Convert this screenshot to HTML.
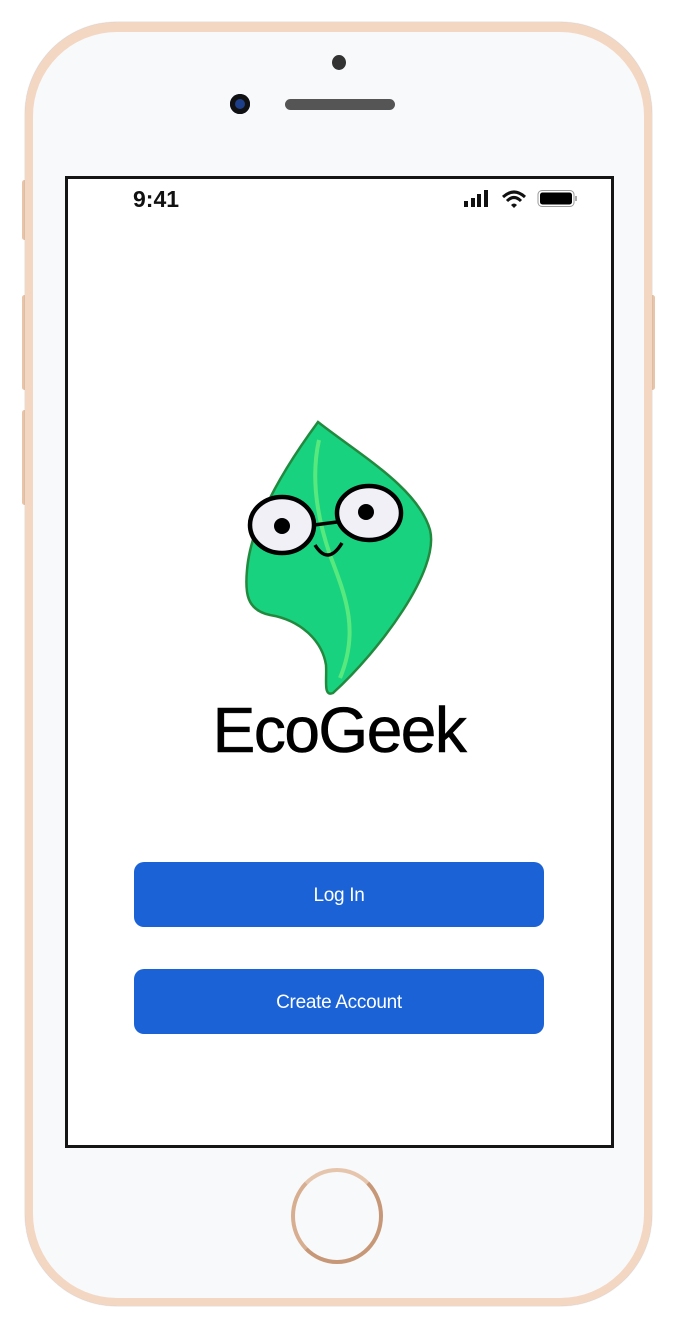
<!DOCTYPE html>
<html><head><meta charset="utf-8"><style>
html,body{margin:0;padding:0;background:#fff;}
body{width:676px;height:1330px;position:relative;overflow:hidden;font-family:"Liberation Sans",sans-serif;}
.body{position:absolute;left:25px;top:22px;width:627px;height:1284px;border-radius:92px;background:#f3d7c3;box-shadow:0 0 1px #999;}
.face{position:absolute;left:33px;top:32px;width:611px;height:1266px;border-radius:84px;background:#f8f9fb;}
.screen{position:absolute;left:65px;top:176px;width:543px;height:966px;border:3px solid #151515;background:#fff;}
.btn{position:absolute;left:134px;width:410px;height:65px;border-radius:10px;background:#1a62d6;color:#fff;font-size:19px;text-align:center;line-height:67px;letter-spacing:-0.3px;}
.side{position:absolute;background:#e9c4a8;}
</style></head><body>
<div class="side" style="left:22px;top:180px;width:5px;height:60px;border-radius:3px"></div>
<div class="side" style="left:22px;top:295px;width:5px;height:95px;border-radius:3px"></div>
<div class="side" style="left:22px;top:410px;width:5px;height:95px;border-radius:3px"></div>
<div class="side" style="left:650px;top:295px;width:5px;height:95px;border-radius:3px"></div>
<div class="body"></div>
<div class="face"></div>
<div style="position:absolute;left:332px;top:55px;width:14px;height:15px;border-radius:50%;background:#333"></div>
<div style="position:absolute;left:230px;top:94px;width:20px;height:20px;border-radius:50%;background:#111;box-shadow:inset 0 0 0 5px #111, inset 0 0 0 10px #1d3f8a"></div>
<div style="position:absolute;left:285px;top:99px;width:110px;height:11px;border-radius:6px;background:#555"></div>
<div class="screen"></div>
<div style="position:absolute;left:133px;top:186px;font-size:23px;font-weight:bold;color:#111">9:41</div>
<svg style="position:absolute;left:460px;top:186px" width="122" height="26" viewBox="460 186 122 26">
<rect x="464" y="201" width="4" height="6" fill="#111"/><rect x="471" y="198" width="4" height="9" fill="#111"/><rect x="477" y="194" width="4" height="13" fill="#111"/><rect x="484" y="190" width="4" height="17" fill="#111"/>
<path d="M503 197 Q514 187 525 197" stroke="#111" stroke-width="3" fill="none"/><path d="M507 201 Q514 194 521 201" stroke="#111" stroke-width="3" fill="none"/><path d="M511 205 L514 208 L517 205 Q514 202 511 205Z" fill="#111"/>
<rect x="538" y="190.5" width="36" height="16" rx="4" fill="none" stroke="#999" stroke-width="1"/><rect x="540" y="192.5" width="32" height="12" rx="2.5" fill="#000"/><rect x="575" y="196" width="2" height="5" fill="#aaa"/>
</svg>
<svg style="position:absolute;left:0;top:0" width="676" height="760" viewBox="0 0 676 760">
<path d="M318,422 C360,455 418,488 430,530 C440,570 380,650 333,693 C323,697 327,680 326,665 C322,640 300,620 270,615 C246,610 245,592 247,570 C251,520 290,460 318,422 Z" fill="#18d27f" stroke="#228a3f" stroke-width="2.5"/>
<path d="M319,440 C310,480 318,520 330,555 C345,595 360,630 340,678" fill="none" stroke="#57e97e" stroke-width="4"/>
<ellipse cx="282" cy="525" rx="32" ry="28" fill="#f1f0f6" stroke="#000" stroke-width="4.5"/>
<ellipse cx="369" cy="513" rx="32" ry="27" fill="#f1f0f6" stroke="#000" stroke-width="4.5"/>
<circle cx="282" cy="526" r="8" fill="#000"/><circle cx="366" cy="512" r="8" fill="#000"/>
<path d="M314,525 L337,522" stroke="#000" stroke-width="3.5"/>
<path d="M315,545 Q328,566 342,543" fill="none" stroke="#000" stroke-width="3.5"/>
<text x="339" y="752" text-anchor="middle" font-family="Liberation Sans, sans-serif" font-size="64" fill="#000" letter-spacing="-1.5" stroke="#000" stroke-width="0.6">EcoGeek</text>
</svg>
<div class="btn" style="top:862px">Log In</div>
<div class="btn" style="top:969px">Create Account</div>
<div style="position:absolute;left:291px;top:1168px;width:92px;height:96px;border-radius:50%;box-sizing:border-box;border:4px solid #c79877;border-top-color:#e6c5ad;border-left-color:#d8ae90"></div>
</body></html>
